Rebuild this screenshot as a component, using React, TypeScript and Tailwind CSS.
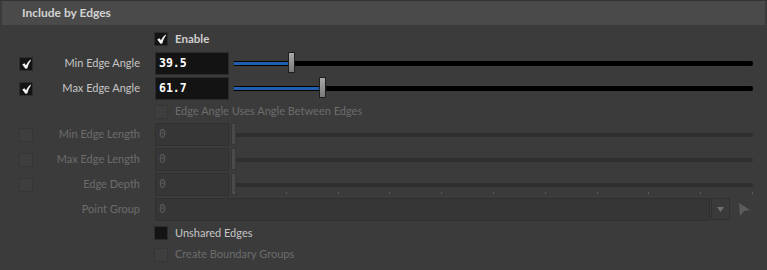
import React from "react";

const Check = () => (
  <svg width="9" height="10" viewBox="0 0 11 12" className="block">
    <path d="M0.3 6.6 L3 5 L4.8 7.6 Q7 3 10.4 0.4 L11 1.4 Q8.4 4.6 6.4 11.6 L4.2 11.8 Z" fill="#f4f4f4" />
  </svg>
);

const CheckedBox = () => (
  <div className="w-[14px] h-[14px] shrink-0 bg-[#141414] border border-[#2c2c2c] relative">
    <div className="absolute inset-0 flex items-center justify-center">
      <Check />
    </div>
  </div>
);

const EmptyBox = ({ disabled }: { disabled?: boolean }) => (
  <div
    className={
      "w-[14px] h-[14px] shrink-0 border " +
      (disabled ? "bg-[#3e3e3e] border-[#363636]" : "bg-[#141414] border-[#2c2c2c]")
    }
  />
);

const Slider = ({ pct }: { pct: number }) => (
  <div className="relative flex-1 h-[22px] ml-[5px] mr-[14px] flex items-center">
    <div className="w-full h-[5px] bg-black rounded-r-[2px] relative">
      <div className="absolute left-0 top-[1px] h-[3px] bg-[#2160b0]" style={{ width: `${pct}%` }} />
    </div>
    <div
      className="absolute top-0 h-[21px] w-[7px] border border-[#1e1e1e] bg-gradient-to-b from-[#a8a8a8] to-[#7a7a7a]"
      style={{ left: `calc(${pct}% - 3px)` }}
    />
  </div>
);

const DisSlider = ({ ticks }: { ticks?: boolean }) => (
  <div className="relative flex-1 h-[23px] ml-[2px] mr-[14px] flex items-center">
    <div className="w-full h-[4px] bg-[#2f2f2f] rounded-r-[2px] ml-[3px]" />
    <div className="absolute left-0 top-0 h-[22px] w-[5px] bg-[#4a4a4a] border border-[#363636]" />
    {ticks && (
      <div className="absolute left-[3px] right-0 bottom-[2px] h-[2px] flex justify-between">
        {Array.from({ length: 11 }).map((_, i) => (
          <div key={i} className="w-[1px] h-[2px] bg-[#5a5a5a]" />
        ))}
      </div>
    )}
  </div>
);

const Label = ({ text, disabled }: { text: string; disabled?: boolean }) => (
  <div className={"w-[107px] text-right whitespace-nowrap " + (disabled ? "text-[#6c6c6c]" : "text-[#c6c6c6]")}>
    {text}
  </div>
);

const mono = { fontFamily: "'DejaVu Sans Mono', monospace" };

export default function App() {
  return (
    <div
      className="w-[767px] h-[270px] bg-[#3b3b3b] overflow-hidden border-t border-[#333333] text-[11px]"
      style={{ fontFamily: "Lato, 'Noto Sans', sans-serif" }}
    >
      <div className="mx-[2px] h-[24px] bg-[#4a4a4a] flex items-center pl-[20px] font-bold text-[12px] text-[#d2d2d2]">
        Include by Edges
      </div>
      {/* Enable */}
      <div className="h-[26px] flex items-center pl-[154px] gap-[7px] mt-[1px]">
        <CheckedBox />
        <span className="font-bold text-[11.5px] text-[#cfcfcf]">Enable</span>
      </div>
      {/* Min Edge Angle */}
      <div className="h-[25px] flex items-start pl-[19px]">
        <div className="h-[23px] flex items-center">
          <CheckedBox />
        </div>
        <div className="h-[23px] flex items-center">
          <Label text="Min Edge Angle" />
        </div>
        <div className="ml-[15px] w-[74px] h-[23px] bg-[#131313] border border-[#2b2b2b] flex items-center pl-[3px] text-white font-bold text-[11.5px]" style={mono}>
          39.5
        </div>
        <Slider pct={10.9} />
      </div>
      {/* Max Edge Angle */}
      <div className="h-[24px] flex items-start pl-[19px]">
        <div className="h-[23px] flex items-center">
          <CheckedBox />
        </div>
        <div className="h-[23px] flex items-center">
          <Label text="Max Edge Angle" />
        </div>
        <div className="ml-[15px] w-[74px] h-[23px] bg-[#131313] border border-[#2b2b2b] flex items-center pl-[3px] text-white font-bold text-[11.5px]" style={mono}>
          61.7
        </div>
        <Slider pct={16.9} />
      </div>
      {/* Edge Angle Uses */}
      <div className="h-[21px] flex items-center pl-[154px] gap-[7px]">
        <EmptyBox disabled />
        <span className="text-[#6c6c6c]">Edge Angle Uses Angle Between Edges</span>
      </div>
      {[
        { t: "Min Edge Length" },
        { t: "Max Edge Length" },
        { t: "Edge Depth", ticks: true },
      ].map((r) => (
        <div key={r.t} className="h-[25px] flex items-start pl-[19px] pt-[1px]">
          <div className="h-[23px] flex items-center">
            <EmptyBox disabled />
          </div>
          <div className="h-[23px] flex items-center">
            <Label text={r.t} disabled />
          </div>
          <div className="ml-[15px] w-[74px] h-[23px] bg-[#363636] border border-[#303030] flex items-center pl-[3px] text-[#5e5e5e] text-[11.5px]" style={mono}>
            0
          </div>
          <DisSlider ticks={r.ticks} />
        </div>
      ))}
      {/* Point Group */}
      <div className="h-[25px] flex items-start pl-[19px] pt-[1px]">
        <div className="w-[14px]" />
        <div className="h-[23px] flex items-center">
          <Label text="Point Group" disabled />
        </div>
        <div className="ml-[15px] flex-1 h-[23px] bg-[#363636] border border-[#303030] flex items-center pl-[3px] text-[#5e5e5e] text-[11.5px]" style={mono}>
          0
        </div>
        <div className="ml-[1px] w-[19px] h-[22px] bg-[#3a3a3a] border border-[#303030] flex items-center justify-center">
          <svg width="7" height="5" viewBox="0 0 7 5">
            <path d="M0 0 H7 L3.5 5 Z" fill="#6e6e6e" />
          </svg>
        </div>
        <div className="w-[37px] h-[23px] flex items-center pl-[8px]">
          <svg width="13" height="13" viewBox="0 0 13 13">
            <path d="M1 0 L12 7 L6 8 L2 13 Z" fill="#5c5c5c" />
          </svg>
        </div>
      </div>
      {/* Unshared Edges */}
      <div className="h-[22px] flex items-center pl-[154px] gap-[7px]">
        <EmptyBox />
        <span className="text-[#c6c6c6]">Unshared Edges</span>
      </div>
      <div className="h-[21px] flex items-center pl-[154px] gap-[7px]">
        <EmptyBox disabled />
        <span className="text-[#6c6c6c]">Create Boundary Groups</span>
      </div>
    </div>
  );
}
